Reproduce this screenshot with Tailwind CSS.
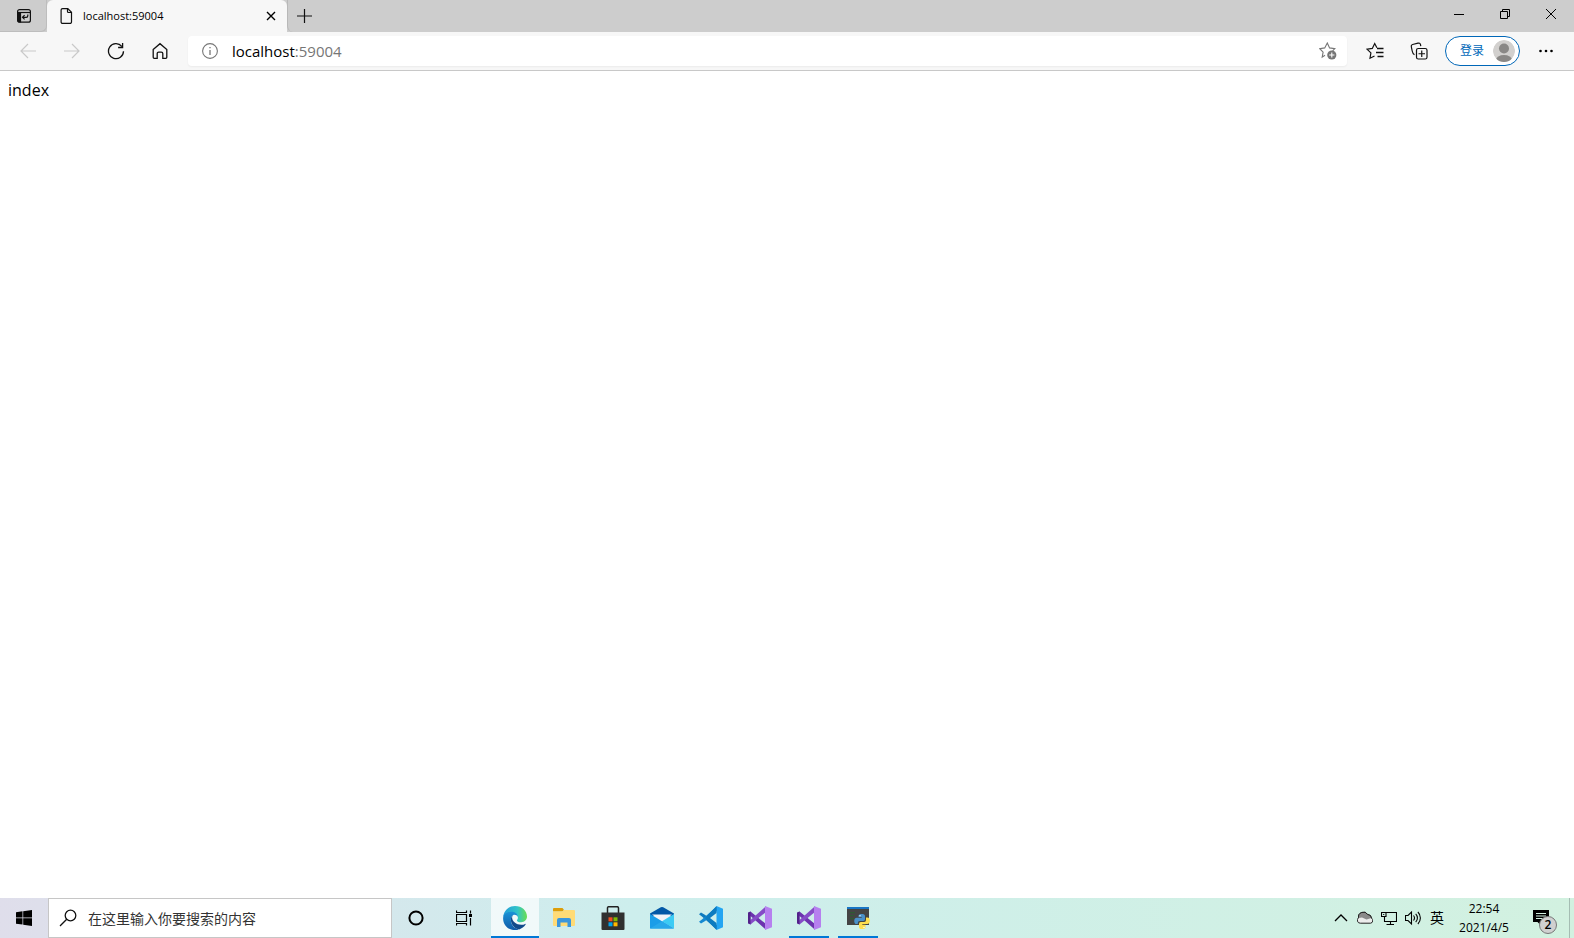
<!DOCTYPE html>
<html lang="zh-CN">
<head>
<meta charset="utf-8">
<meta name="viewport" content="width=device-width, initial-scale=1">
<title>localhost:59004</title>
<script src="https://cdn.jsdelivr.net/npm/@tailwindcss/browser@4"></script>
</head>
<body class="flex h-screen flex-col overflow-hidden bg-white font-['Open_Sans','Noto_Sans_CJK_SC',sans-serif] text-black">

<!-- Tab strip -->
<header class="flex h-8 shrink-0 bg-[#cdcdcd]">
  <button aria-label="Tab actions" class="flex w-[47px] items-center justify-center rounded-br-md border-r border-b border-[#bdbdbd] pl-0.5">
    <svg class="size-4" viewBox="0 0 16 16" fill="none" stroke="#111" stroke-width="1.2"><rect x="1.6" y="1.6" width="12.8" height="12.6" rx="2"/><path d="M1.6 4.5h12.8"/><path d="M2 5h2.5v9H3a1 1 0 0 1-1-1z" fill="#111"/><path d="M11.8 6.5v1.2c0 1-.6 1.6-1.6 1.6H6.8M8.6 7.2L6.5 9.3l2.1 2.1"/></svg>
  </button>
  <div class="flex w-60 items-center rounded-t-md bg-[#f7f7f7] pl-3 pr-2">
    <svg class="h-4 w-4 shrink-0" viewBox="0 0 16 16" fill="none" stroke="#111" stroke-width="1.2"><path d="M3.6.6h5.2l3.7 3.7v9.6a1.5 1.5 0 0 1-1.5 1.5H3.6a1.5 1.5 0 0 1-1.5-1.5V2.1A1.5 1.5 0 0 1 3.6.6z"/><path d="M8.5.8v2.7a1 1 0 0 0 1 1h2.8"/></svg>
    <span class="ml-2 flex-1 text-[11px]">localhost:59004</span>
    <button aria-label="Close tab" class="flex size-4 items-center justify-center"><svg class="size-2.5" viewBox="0 0 10 10" stroke="#000" stroke-width="1.4"><path d="M1 1l8 8M9 1l-8 8"/></svg></button>
  </div>
  <button aria-label="New tab" class="flex w-8 items-center justify-center rounded-bl-md border-l border-[#b8b8b8]"><svg class="size-4" viewBox="0 0 16 16" stroke="#111" stroke-width="1.2"><path d="M8.5 1v14M1 8h15"/></svg></button>
  <div class="flex-1"></div>
  <div class="flex h-7">
    <button aria-label="Minimize" class="flex w-[46px] items-center justify-center"><svg class="size-3" viewBox="0 0 12 12" stroke="#000"><path d="M1 6.5h10"/></svg></button>
    <button aria-label="Restore" class="flex w-[46px] items-center justify-center"><svg class="size-3" viewBox="0 0 12 12" fill="none" stroke="#000"><path d="M1.5 3.5h7v7h-7zM3.5 3.5v-2h7v7h-2"/></svg></button>
    <button aria-label="Close" class="flex w-[46px] items-center justify-center"><svg class="size-3" viewBox="0 0 12 12" stroke="#000"><path d="M1 1l10 10M11 1L1 11"/></svg></button>
  </div>
</header>

<!-- Navigation bar -->
<nav class="flex h-[39px] shrink-0 items-center border-b border-[#c8c8c8] bg-[#f7f7f7] px-1.5">
  <button aria-label="Back" class="flex w-11 justify-center" disabled><svg class="size-4" viewBox="0 0 16 16" fill="none" stroke="#c9c9c9" stroke-width="1.2"><path d="M16 8H1M8 1L1 8l7 7"/></svg></button>
  <button aria-label="Forward" class="flex w-11 justify-center" disabled><svg class="size-4" viewBox="0 0 16 16" fill="none" stroke="#c9c9c9" stroke-width="1.2"><path d="M0 8h15M8 1l7 7-7 7"/></svg></button>
  <button aria-label="Refresh" class="flex w-11 justify-center"><svg class="size-[18px]" viewBox="0 0 18 18" fill="none" stroke="#111" stroke-width="1.3"><path d="M16.5 9.3A7.5 7.5 0 1 1 14.8 4.4M15.6 1v4.5h-4.5"/></svg></button>
  <button aria-label="Home" class="flex w-11 justify-center"><svg class="size-[18px]" viewBox="0 0 18 18" fill="none" stroke="#111" stroke-width="1.3"><path d="M2.2 7.6L9 1.700l6.800 5.900v7.700a1 1 0 0 1-1 1h-3v-4.700a1.500 1.500 0 0 0-1.500-1.500H7.700a1.500 1.500 0 0 0-1.500 1.500v4.700h-3a1 1 0 0 1-1-1z"/></svg></button>
  <div class="ml-1.5 flex h-[30px] flex-1 items-center rounded-sm bg-white pl-3.5 pr-2.5 shadow-xs">
    <svg class="size-4 shrink-0" viewBox="0 0 16 16" fill="none" stroke="#767676" stroke-width="1.1"><circle cx="8" cy="8" r="7.4"/><path d="M8 7v5M8 4v1.3" stroke-width="1.3"/></svg>
    <div class="relative ml-3.5 flex-1 text-[15px] leading-6">
      <input type="text" aria-label="Address" class="peer block h-6 w-full bg-transparent outline-none">
      <span class="pointer-events-none absolute top-0 left-0 text-[#767676] peer-focus:hidden"><span class="text-black">localhost</span>:59004</span>
    </div>
    <button aria-label="Add favorite"><svg class="size-[18px]" viewBox="0 0 18 18" fill="none" stroke="#767676" stroke-width="1.1"><path d="M6 13.3l-2.800 1.800.9-5L.8 6.700l4.900-.8L8.300 1l2.300 4.900 5.200.8-2.200 2.200"/><circle cx="12.8" cy="13" r="4.6" fill="#767676" stroke="none"/><path d="M12.8 10.4v5.2M10.2 13h5.2" stroke="#fff"/></svg></button>
  </div>
  <button aria-label="Favorites" class="ml-1.5 flex w-11 justify-center"><svg class="size-[18px]" viewBox="0 0 18 18" fill="none" stroke="#111" stroke-width="1.2"><path d="M8.5 14L4 16.2l.9-5.300L1 7.200l5.300-.8L8.700 1.500l2.200 4.300"/><path d="M11 6.500h6.500M10 10.500h7.500M11.500 14.500h6" stroke-width="1.3"/></svg></button>
  <button aria-label="Collections" class="flex w-11 justify-center"><svg class="size-[18px]" viewBox="0 0 18 18" fill="none" stroke="#111" stroke-width="1.2"><rect x="6.5" y="6.5" width="10.5" height="10.5" rx="1.8"/><path d="M11.75 8.5v6.5M8.5 11.75h6.500"/><path d="M4.500 12.800c-1.500-.8-2-2.300-2.300-3.800L1.300 4.700c-.3-1.200.3-1.900 1.300-2.200L8 1.200c1.200-.3 2.200.2 2.500 1.500l.3 1.500"/></svg></button>
  <button class="ml-1 flex h-[30px] w-[75px] items-center justify-between rounded-full border border-[#0067b8] bg-white pl-3.5 pr-1 text-xs text-[#0067b8]">登录
    <svg class="size-[22px]" viewBox="0 0 22 22"><defs><clipPath id="av"><circle cx="11" cy="11" r="11"/></clipPath></defs><g clip-path="url(#av)"><circle cx="11" cy="11" r="11" fill="#d2d0ce"/><circle cx="11" cy="8.5" r="5" fill="#8a8886"/><ellipse cx="11" cy="20" rx="8" ry="5" fill="#8a8886"/></g></svg>
  </button>
  <button aria-label="Settings and more" class="ml-1 flex w-11 justify-center"><svg class="size-4" viewBox="0 0 16 16"><circle cx="2.5" cy="8" r="1.3"/><circle cx="8" cy="8" r="1.3"/><circle cx="13.5" cy="8" r="1.3"/></svg></button>
</nav>

<!-- Page -->
<main class="flex-1 px-2 py-[7px] text-base leading-6">index</main>

<!-- Taskbar -->
<footer class="flex h-10 shrink-0 bg-linear-to-r from-[#dfdeeb] via-[#cdeeed] via-40% to-[#d2f1e0]">
  <button aria-label="Start" class="flex w-12 items-center justify-center"><svg class="size-4" viewBox="0 0 16 16"><path d="M0 2.2l6.5-.9v6.200H0zM7.2 1.200L16 0v7.500H7.2zM0 8.300h6.500v6.200L0 13.700zM7.2 8.300H16V16l-8.800-1.300z"/></svg></button>
  <div class="flex w-[344px] items-center border border-[#c6c6c6] bg-white pl-2.5">
    <svg class="size-[18px] shrink-0" viewBox="0 0 18 18" fill="none" stroke="#111" stroke-width="1.3"><circle cx="11.5" cy="6.5" r="5.3"/><path d="M7.7 10.3L1 17"/></svg>
    <input type="text" aria-label="搜索" placeholder="在这里输入你要搜索的内容" class="ml-[11px] h-8 min-w-0 flex-1 text-sm outline-none placeholder:text-[#333]">
  </div>
  <button aria-label="Cortana" class="flex w-12 items-center justify-center"><svg class="size-4" viewBox="0 0 16 16"><circle cx="8" cy="8" r="6.6" fill="none" stroke="#000" stroke-width="2"/></svg></button>
  <button aria-label="Task view" class="flex w-12 items-center justify-center"><svg class="size-4" viewBox="0 0 16 16" fill="none" stroke="#000"><path d="M.5.5v2h10v-2M.5 15.5v-2h10v2M.5 4.5h10v7H.5zM14.5.5v3M14.5 8v7.5" stroke-width="1.2"/><path d="M13 4h3v3h-3z" fill="#000" stroke="none"/></svg></button>
  <div class="ml-[3px] flex gap-px">
    <button aria-label="Microsoft Edge" class="flex w-12 items-center justify-center border-b-2 border-[#0078d7] bg-white/70 pt-0.5">
      <svg class="size-6" viewBox="0 0 24 24"><defs><linearGradient id="e1" x1="0" x2="1"><stop stop-color="#229bd8"/><stop offset=".6" stop-color="#31c4c8"/><stop offset="1" stop-color="#6ade50"/></linearGradient><linearGradient id="e2" x1="0" y1="0" x2="0" y2="1"><stop stop-color="#1b92d6"/><stop offset="1" stop-color="#0f5aa8"/></linearGradient></defs><path d="M.2 11C.8 4.700 5.700 0 12 0c7 0 12 4.800 12 10.500 0 3.300-2.500 5.700-5.800 5.700-3 0-4.300-1-4.300-1.800 0-.7 1-1 1-2.700 0-2.500-2.200-4.700-5.400-4.700C5 7 1.500 8.500.2 11z" fill="url(#e1)"/><path d="M.1 12C.5 8 4 5.700 8.300 5.700c3.700 0 6.300 2 6.600 5-.8-1.300-2-2-3.400-2-2 0-3.600 2.300-3.600 5.300 0 4.500 3.200 8.300 7.800 9.400C7.500 26 0 20.500.1 12z" fill="url(#e2)"/><path d="M9.700 9.400C8.500 10.300 7.800 12 7.900 14c.1 4.800 4 9 8.300 9.400 2.600-.9 4.800-2.500 6.400-4.900.3-.5-.1-.8-.5-.6-1 .5-2.300.9-3.900.9-4.900 0-9.100-3.200-9.100-7.200 0-.8.2-1.600.6-2.200z" fill="#114a8b"/></svg>
    </button>
    <button aria-label="File Explorer" class="flex w-12 items-center justify-center"><svg class="size-6" viewBox="0 0 24 24"><path d="M1 3a1 1 0 0 1 1-1h8.500l1.500 2-1.500 1.500H1z" fill="#dd9d08"/><path d="M1 5.500h9.500L12 4h10a1 1 0 0 1 1 1v14a1 1 0 0 1-1 1H2a1 1 0 0 1-1-1z" fill="#ffdb76"/><path d="M5 21v-7a2 2 0 0 1 2-2h10a2 2 0 0 1 2 2v7h-3.500v-4.500h-7V21z" fill="#3b97dc"/></svg></button>
    <button aria-label="Microsoft Store" class="flex w-12 items-center justify-center"><svg class="size-6" viewBox="0 0 24 24"><path d="M6.500 7V2a1.300 1.300 0 0 1 1.300-1.300h8.400A1.300 1.300 0 0 1 17.500 2v5" fill="none" stroke="#222" stroke-width="1.5"/><path d="M.5 6.500h23V23a1 1 0 0 1-1 1h-21a1 1 0 0 1-1-1z" fill="#303030"/><path d="M7.500 11.300h4v4h-4z" fill="#f25022"/><path d="M12.500 11.300h4v4h-4z" fill="#7fba00"/><path d="M7.500 16.300h4v4h-4z" fill="#00a4ef"/><path d="M12.500 16.300h4v4h-4z" fill="#ffb900"/></svg></button>
    <button aria-label="Mail" class="flex w-12 items-center justify-center"><svg class="size-6" viewBox="0 0 24 24"><path d="M0 7.500L10.800 1.300a2.500 2.500 0 0 1 2.400 0L24 7.500V10H0z" fill="#0358a7"/><path d="M2 8.500h20L12 16z" fill="#f3f4f8"/><path d="M0 8l24 14.500H0z" fill="#1b9de8"/><path d="M24 8v14.500L12 15.300z" fill="#3ccbf4"/><path d="M0 22.500h24L12 15.300z" fill="#28a8ea"/></svg></button>
    <button aria-label="Visual Studio Code" class="flex w-12 items-center justify-center"><svg class="size-6" viewBox="0 0 24 24"><path d="M0 8.300l2-1.900 4.200 2.500L18 19v4.700L3.500 11z" fill="#0e7abf"/><path d="M0 15.700l2 1.900 4.200-2.500L18 5V.3L3.500 13z" fill="#1489d1"/><path d="M17.500 0L24 2.800v18.400L17.500 24z" fill="#24a5f2"/><path d="M17.500 0v7L11 12l6.500 5v7L8 14.300 6 12l2-2.300z" fill="#0d7bc0"/></svg></button>
    <button aria-label="Visual Studio" class="flex w-12 items-center justify-center"><svg class="size-6" viewBox="0 0 24 24"><path d="M0 6.800l2.500-1.300L18 18v5.700L2.500 10v5.500L0 17.200z" fill="#6c33af"/><path d="M0 17.200l2.500 1.300L18 6V.3L2.500 14z" fill="#854cc7"/><path d="M0 6.800l2.500-1.300v13L0 17.200z" fill="#52218a"/><path d="M17 0l7 2.800v18.400L17 24z" fill="#b680ef"/></svg></button>
    <button aria-label="Visual Studio, running" class="relative flex w-12 items-center justify-center after:absolute after:inset-x-1 after:bottom-0 after:h-0.5 after:bg-[#0078d7]"><svg class="size-6" viewBox="0 0 24 24"><path d="M0 6.800l2.500-1.300L18 18v5.700L2.500 10v5.500L0 17.200z" fill="#6c33af"/><path d="M0 17.200l2.500 1.300L18 6V.3L2.500 14z" fill="#854cc7"/><path d="M0 6.800l2.500-1.300v13L0 17.200z" fill="#52218a"/><path d="M17 0l7 2.800v18.400L17 24z" fill="#b680ef"/></svg></button>
    <button aria-label="Python console" class="relative flex w-12 items-center justify-center after:absolute after:inset-x-1 after:bottom-0 after:h-0.5 after:bg-[#0078d7]"><svg class="size-6" viewBox="0 0 24 24"><path d="M1 1h22v18H1z" fill="#444"/><path d="M1 1h22v2H1z" fill="#1976c5"/><path d="M4 6h5v1.200H4zM4 9h4v1.200H4zM4 12h4v1.200H4z" fill="#2f5a33"/><path d="M12.500 9.800c0-1.200 1.300-1.800 3.200-1.800s3.300.6 3.300 1.900v3.400a1.800 1.800 0 0 1-1.800 1.800h-3.400a2 2 0 0 0-2 2v1h-1.300c-1.500 0-2.300-1.300-2.300-3.200s.8-3.200 2.500-3.200h5v-.6h-3.200z" fill="#4a90c8"/><path d="M20 11.500h1.500c1.600 0 2.300 1.500 2.300 3.300s-.8 3.300-2.500 3.300h-5v.7h3.200v2.400c0 1.300-1.300 1.900-3.200 1.900s-3.300-.7-3.300-1.900v-3.400a1.800 1.800 0 0 1 1.800-1.800h3.400a2 2 0 0 0 1.800-2z" fill="#ffdf50"/><circle cx="14" cy="9.700" r=".7" fill="#fff"/><circle cx="18" cy="21.500" r=".7" fill="#fff"/></svg></button>
  </div>
  <div class="flex-1"></div>
  <div class="flex items-center">
    <button aria-label="Show hidden icons" class="flex w-6 justify-center"><svg class="size-4" viewBox="0 0 16 16" fill="none" stroke="#000" stroke-width="1.3"><path d="M2 11l6-6 6 6"/></svg></button>
    <button aria-label="OneDrive" class="flex w-6 justify-center"><svg class="size-4" viewBox="0 0 16 16" stroke="#222"><path d="M3.300 13.200A3 3 0 0 1 1.500 7.800 5 5 0 0 1 10.700 4.500a4 4 0 0 1 3.800 3.700 2.700 2.700 0 0 1-1 5z" fill="#ececec"/><path d="M1.500 8A5 5 0 0 1 10.700 4.500c1.700.2 3.200 1.500 3.700 3.500L9.500 9.500 5 7.500z" fill="#8a8a8a" stroke="none"/><path d="M1.500 7.800A5 5 0 0 1 10.700 4.500a4 4 0 0 1 3.800 3.700" fill="none"/></svg></button>
    <button aria-label="Network" class="flex w-6 justify-center"><svg class="size-4" viewBox="0 0 16 16" fill="none" stroke="#000" stroke-width="1.1"><path d="M5 2.500h10.500v9H3.500V7M9.500 11.500v3M5.500 14.500h7.500M.5 2.500H5v4H.5zM2.700 4v1"/></svg></button>
    <button aria-label="Volume" class="flex w-6 justify-center"><svg class="size-4" viewBox="0 0 16 16" fill="none" stroke="#000" stroke-width="1.1"><path d="M.5 5.500h2.500l3.500-3.500v12L3 10.500H.5zM8.500 5.500a4 4 0 0 1 0 5M10.700 3.800a6 6 0 0 1 0 8.400M12.900 2a8.500 8.500 0 0 1 0 12"/></svg></button>
    <button class="w-6 text-sm">英</button>
    <button class="w-[70px] text-center text-xs leading-[19px]"><time datetime="2021-04-05T22:54"><span class="block">22:54</span><span class="block">2021/4/5</span></time></button>
    <button aria-label="Notifications" class="relative flex w-[50px] items-center pl-3.5"><svg class="size-4" viewBox="0 0 16 16"><path d="M0 0h16v12H8v3.500L4.500 12H0z"/><path d="M3 3.500h10M3 6h10M3 8.500h7" stroke="#d2f1e0"/></svg>
      <span class="absolute top-1.5 left-5 flex size-[18px] items-center justify-center rounded-full border border-[#777] bg-[#d0d0d0] text-xs font-semibold">2</span></button>
  </div>
  <button aria-label="Show desktop" class="w-[5px] border-l border-[#a5bdb3]"></button>
</footer>
</body>
</html>
